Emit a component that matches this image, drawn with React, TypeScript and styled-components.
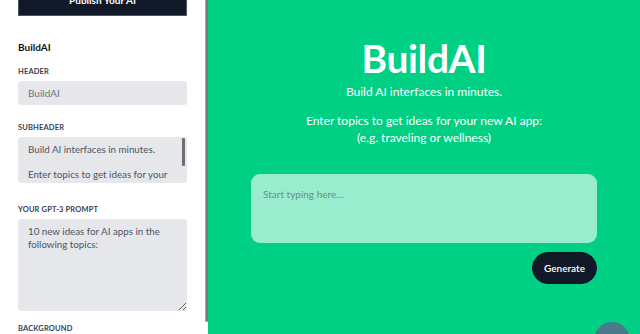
import React from 'react';
import styled, { createGlobalStyle } from 'styled-components';

const GlobalStyle = createGlobalStyle`
  html, body {
    margin: 0;
    padding: 0;
    height: 100%;
    overflow: hidden;
  }
  body {
    font-family: Lato, "Noto Sans", sans-serif;
    background: #ffffff;
  }
  * {
    box-sizing: border-box;
  }
`;

const Page = styled.div`
  display: flex;
  width: 100vw;
  height: 100vh;
  overflow: hidden;
`;

const Sidebar = styled.aside`
  display: flex;
  width: 208px;
  flex-shrink: 0;
  height: 100%;
  background: #ffffff;
`;

const Panel = styled.div`
  flex: 1;
  padding: 0 18px;
  overflow: hidden;
`;

const ScrollTrack = styled.div`
  width: 3px;
  height: 100%;
  display: flex;
  flex-direction: column;
`;

const ScrollThumb = styled.div`
  height: calc(100% - 12px);
  background: #7b7b7b;
  border-left: 1px solid #a5a5a5;
  border-radius: 0 0 2px 2px;
`;

const PublishButton = styled.button`
  display: block;
  width: 100%;
  height: 32px;
  margin-top: -16px;
  background: #111827;
  border: 1px solid #4b5563;
  color: #ffffff;
  font-family: Lato, "Noto Sans", sans-serif;
  font-size: 10px;
  font-weight: 700;
  padding: 0;
`;

const SideTitle = styled.h2`
  margin: 25px 0 0;
  font-size: 10px;
  line-height: 12px;
  font-weight: 700;
  color: #111111;
`;

const Field = styled.div<{ $space: number }>`
  margin-top: ${(p) => p.$space}px;
`;

const Label = styled.label`
  display: block;
  font-size: 7.5px;
  line-height: 10px;
  font-weight: 700;
  text-transform: uppercase;
  letter-spacing: 0.02em;
  color: #374151;
  margin-bottom: 4px;
`;

const TextInput = styled.input`
  display: block;
  width: 100%;
  height: 24px;
  border: none;
  border-radius: 3px;
  background: #e5e7eb;
  padding: 0 10px;
  font-family: Lato, "Noto Sans", sans-serif;
  font-size: 10px;
  color: #6b7280;
  outline: none;
`;

const AreaWrap = styled.div`
  position: relative;
`;

const TextArea = styled.textarea<{ $height: number; $fixed?: boolean }>`
  display: block;
  width: 100%;
  height: ${(p) => p.$height}px;
  border: none;
  border-radius: 3px;
  background: #e5e7eb;
  padding: 6px 10px;
  font-family: Lato, "Noto Sans", sans-serif;
  font-size: 9.75px;
  line-height: 12.5px;
  color: #4b5563;
  outline: none;
  overflow: hidden;
  resize: ${(p) => (p.$fixed ? 'none' : 'vertical')};
`;

/* the textarea's own scroll thumb, shown over its right edge */
const AreaThumb = styled.div`
  position: absolute;
  top: 1px;
  right: 2px;
  width: 3px;
  height: 28px;
  border-radius: 1px;
  background: #6f6f6f;
`;

const Main = styled.main`
  flex: 1;
  height: 100%;
  background: #00d084;
  display: flex;
  flex-direction: column;
  align-items: center;
  padding-top: 39px;
  color: #ffffff;
`;

const Heading = styled.h1`
  margin: 0;
  font-size: 39px;
  line-height: 39px;
  font-weight: 700;
  letter-spacing: -0.01em;
`;

const Tagline = styled.p`
  margin: 5px 0 0;
  font-size: 12px;
  line-height: 17px;
`;

const Instructions = styled.p`
  margin: 12px 0 0;
  font-size: 12px;
  line-height: 17px;
  text-align: center;
`;

const Composer = styled.div`
  width: 346px;
  margin-top: 28px;
  display: flex;
  flex-direction: column;
  align-items: flex-end;
`;

const PromptBox = styled.textarea`
  width: 100%;
  height: 69px;
  border: none;
  border-radius: 9px;
  background: rgba(255, 255, 255, 0.6);
  padding: 13px 12px;
  font-family: Lato, "Noto Sans", sans-serif;
  font-size: 10px;
  line-height: 14px;
  color: #1f2937;
  resize: none;
  outline: none;

  &::placeholder {
    color: #6b8f80;
  }
`;

const GenerateButton = styled.button`
  margin-top: 9px;
  width: 65px;
  height: 32px;
  border-radius: 9999px;
  background: #111827;
  border: 1px solid #0b1220;
  color: #ffffff;
  font-family: Lato, "Noto Sans", sans-serif;
  font-size: 10px;
  font-weight: 600;
  padding: 0;
`;

const FloatingBubble = styled.div`
  position: fixed;
  left: 594px;
  top: 322px;
  width: 36px;
  height: 36px;
  border-radius: 50%;
  background: #4a7b8b;
`;

const App: React.FC = () => {
  return (
    <>
      <GlobalStyle />
      <Page>
        <Sidebar>
          <Panel>
            <PublishButton>Publish Your AI</PublishButton>
            <SideTitle>BuildAI</SideTitle>

            <Field $space={14}>
              <Label>Header</Label>
              <TextInput defaultValue="BuildAI" />
            </Field>

            <Field $space={18}>
              <Label>Subheader</Label>
              <AreaWrap>
                <TextArea
                  $height={46}
                  $fixed
                  defaultValue={
                    'Build AI interfaces in minutes.\n\nEnter topics to get ideas for your new AI app:\n(e.g. traveling or wellness)'
                  }
                />
                <AreaThumb />
              </AreaWrap>
            </Field>

            <Field $space={22}>
              <Label>Your GPT-3 Prompt</Label>
              <TextArea
                $height={92}
                defaultValue="10 new ideas for AI apps in the following topics:"
              />
            </Field>

            <Field $space={13}>
              <Label>Background</Label>
            </Field>
          </Panel>
          <ScrollTrack>
            <ScrollThumb />
          </ScrollTrack>
        </Sidebar>

        <Main>
          <Heading>BuildAI</Heading>
          <Tagline>Build AI interfaces in minutes.</Tagline>
          <Instructions>
            Enter topics to get ideas for your new AI app:
            <br />
            (e.g. traveling or wellness)
          </Instructions>
          <Composer>
            <PromptBox placeholder="Start typing here..." />
            <GenerateButton>Generate</GenerateButton>
          </Composer>
        </Main>
      </Page>
      <FloatingBubble />
    </>
  );
};

export default App;
